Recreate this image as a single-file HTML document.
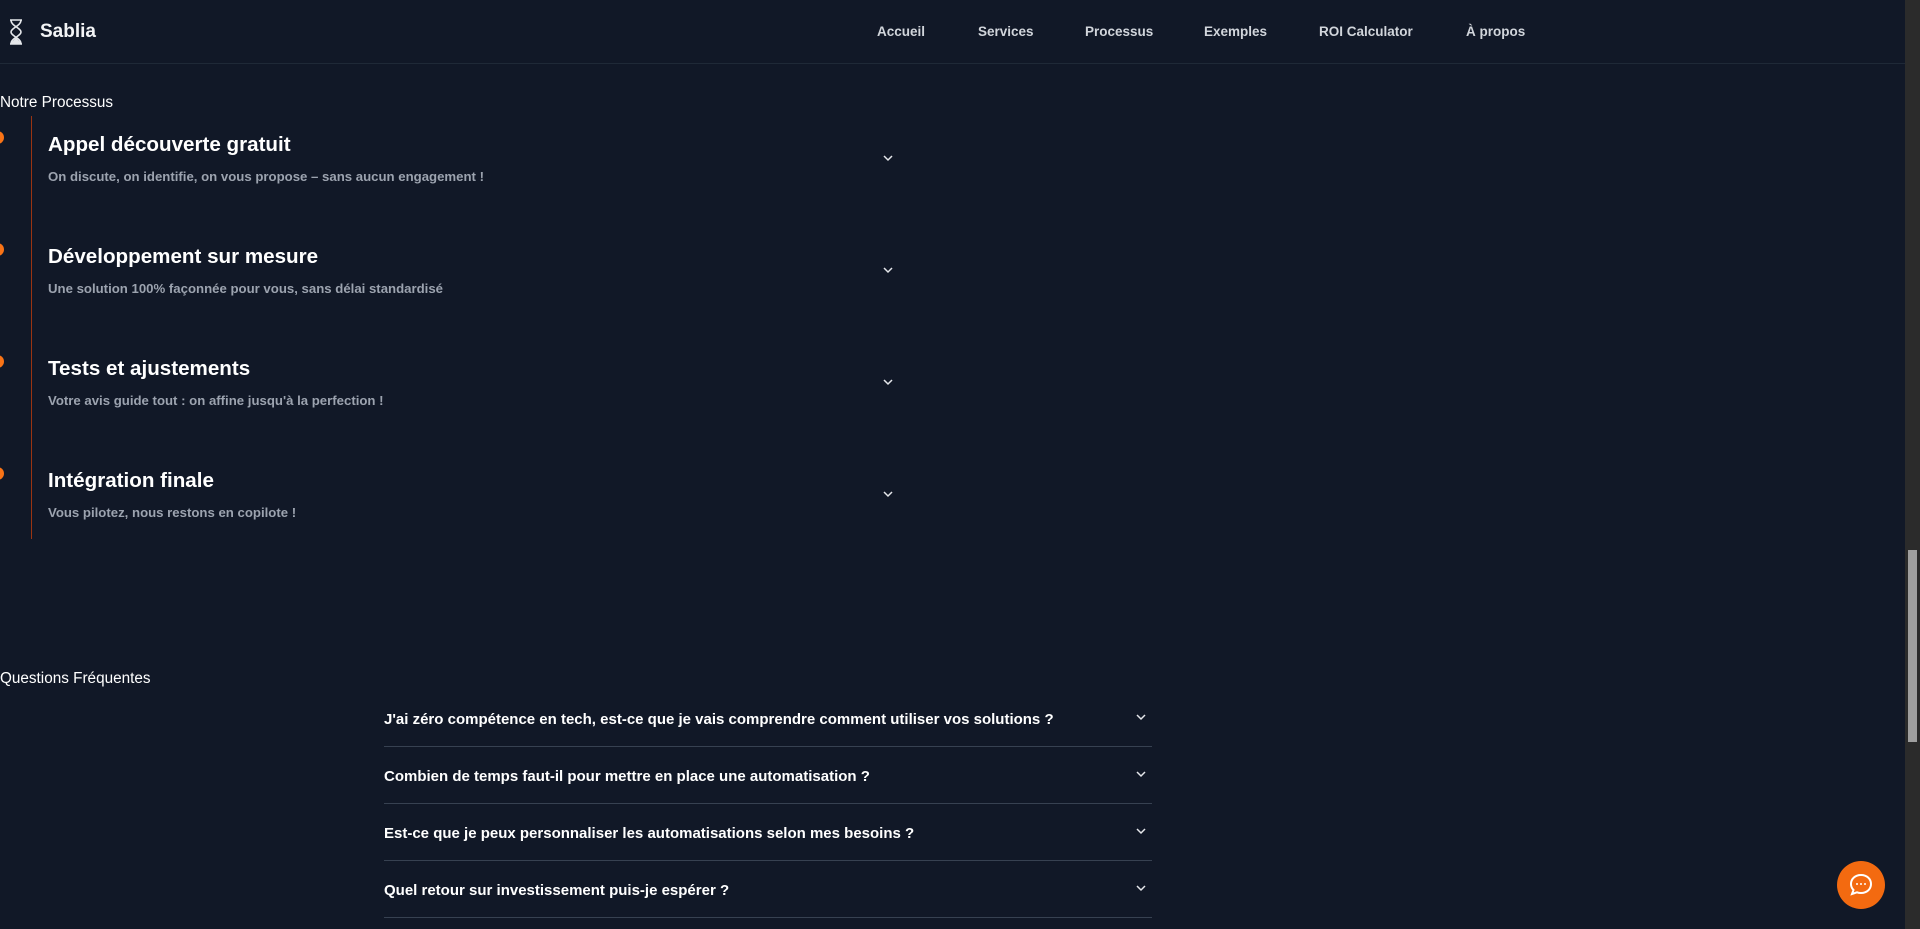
<!DOCTYPE html>
<html><head><meta charset="utf-8"><style>
*{margin:0;padding:0;box-sizing:border-box}
html,body{width:1920px;height:929px;overflow:hidden;background:#111827;font-family:"Liberation Sans",sans-serif;color:#fff}
.hdr{position:absolute;left:0;top:0;width:1905px;height:64px;border-bottom:1px solid #1f2937}
.logo{position:absolute;left:8px;top:19px}
.brand{position:absolute;left:40px;top:21px;font-size:19px;font-weight:bold;color:#f3f4f6}
.nav a{position:absolute;top:24px;font-size:13.5px;font-weight:bold;color:#d1d5db;text-decoration:none}
.h{position:absolute;left:0;font-size:15.3px;color:#fff}
.vline{position:absolute;left:31px;top:116px;width:1px;height:423px;background:#9a3412}
.dot{position:absolute;left:-9px;width:13px;height:13px;border-radius:50%;background:#f97316}
.st{position:absolute;left:48px;font-size:20.6px;font-weight:bold;color:#fff}
.ss{position:absolute;left:48px;font-size:13.2px;font-weight:bold;color:#9ca3af}
.chev{position:absolute}
.faq{position:absolute;left:384px;width:768px;height:57px;border-bottom:1px solid #374151}
.faq span{position:absolute;left:0;top:21px;font-size:15px;font-weight:bold;color:#fff}
.faq svg{position:absolute;right:6px;top:24px}
.sb{position:absolute;right:0;top:0;width:15px;height:929px;background:#2b2b2b}
.thumb{position:absolute;right:3px;top:550px;width:9px;height:192px;background:#9f9f9f}
.chat{position:absolute;left:1837px;top:861px;width:48px;height:48px;border-radius:50%;background:#f36a10}
</style></head><body>
<div class="hdr">
<svg class="logo" width="16" height="26" viewBox="0 0 16 26" fill="none" stroke="#e5e7eb" stroke-width="1.6"><path d="M2 1h12M2 25h12M3 1c0 6 10 8 10 12S3 19 3 25M13 1c0 6-10 8-10 12s10 6 10 12"/><path d="M4 24l4-4 4 4z" fill="#e5e7eb"/></svg>
<div class="brand">Sablia</div>
<div class="nav"><a style="left:877px">Accueil</a><a style="left:978px">Services</a><a style="left:1085px">Processus</a><a style="left:1204px">Exemples</a><a style="left:1319px">ROI Calculator</a><a style="left:1466px">À propos</a></div>
</div>
<div class="h" style="top:94px">Notre Processus</div>
<div class="vline"></div>
<div class="dot" style="top:131px"></div>
<div class="dot" style="top:243px"></div>
<div class="dot" style="top:355px"></div>
<div class="dot" style="top:467px"></div>
<div class="st" style="top:133px">Appel découverte gratuit</div>
<div class="ss" style="top:169px">On discute, on identifie, on vous propose – sans aucun engagement !</div>
<div class="st" style="top:245px">Développement sur mesure</div>
<div class="ss" style="top:281px">Une solution 100% façonnée pour vous, sans délai standardisé</div>
<div class="st" style="top:357px">Tests et ajustements</div>
<div class="ss" style="top:393px">Votre avis guide tout : on affine jusqu'à la perfection !</div>
<div class="st" style="top:469px">Intégration finale</div>
<div class="ss" style="top:505px">Vous pilotez, nous restons en copilote !</div>
<svg class="chev" style="left:883px;top:155px" width="10" height="7" viewBox="0 0 10 7" fill="none" stroke="#e5e7eb" stroke-width="1.5"><path d="M1 1l4 4 4-4"/></svg>
<svg class="chev" style="left:883px;top:267px" width="10" height="7" viewBox="0 0 10 7" fill="none" stroke="#e5e7eb" stroke-width="1.5"><path d="M1 1l4 4 4-4"/></svg>
<svg class="chev" style="left:883px;top:379px" width="10" height="7" viewBox="0 0 10 7" fill="none" stroke="#e5e7eb" stroke-width="1.5"><path d="M1 1l4 4 4-4"/></svg>
<svg class="chev" style="left:883px;top:491px" width="10" height="7" viewBox="0 0 10 7" fill="none" stroke="#e5e7eb" stroke-width="1.5"><path d="M1 1l4 4 4-4"/></svg>
<div class="h" style="top:670px">Questions Fréquentes</div>
<div class="faq" style="top:690px"><span>J'ai zéro compétence en tech, est-ce que je vais comprendre comment utiliser vos solutions ?</span><svg width="10" height="7" viewBox="0 0 10 7" fill="none" stroke="#e5e7eb" stroke-width="1.5"><path d="M1 1l4 4 4-4"/></svg></div>
<div class="faq" style="top:747px"><span>Combien de temps faut-il pour mettre en place une automatisation ?</span><svg width="10" height="7" viewBox="0 0 10 7" fill="none" stroke="#e5e7eb" stroke-width="1.5"><path d="M1 1l4 4 4-4"/></svg></div>
<div class="faq" style="top:804px"><span>Est-ce que je peux personnaliser les automatisations selon mes besoins ?</span><svg width="10" height="7" viewBox="0 0 10 7" fill="none" stroke="#e5e7eb" stroke-width="1.5"><path d="M1 1l4 4 4-4"/></svg></div>
<div class="faq" style="top:861px"><span>Quel retour sur investissement puis-je espérer ?</span><svg width="10" height="7" viewBox="0 0 10 7" fill="none" stroke="#e5e7eb" stroke-width="1.5"><path d="M1 1l4 4 4-4"/></svg></div>
<div class="chat"><svg width="48" height="48" viewBox="0 0 48 48" fill="none" stroke="#fff" stroke-width="2"><path d="M24 14c6 0 10 4 10 9s-4 9-10 9c-1.5 0-3-.3-4-.7L15 33l1.5-4C15 27.5 14 25.5 14 23c0-5 4-9 10-9z"/><circle cx="20" cy="23" r="1" fill="#fff" stroke="none"/><circle cx="24" cy="23" r="1" fill="#fff" stroke="none"/><circle cx="28" cy="23" r="1" fill="#fff" stroke="none"/></svg></div>
<div class="sb"><div class="thumb"></div></div>
</body></html>
